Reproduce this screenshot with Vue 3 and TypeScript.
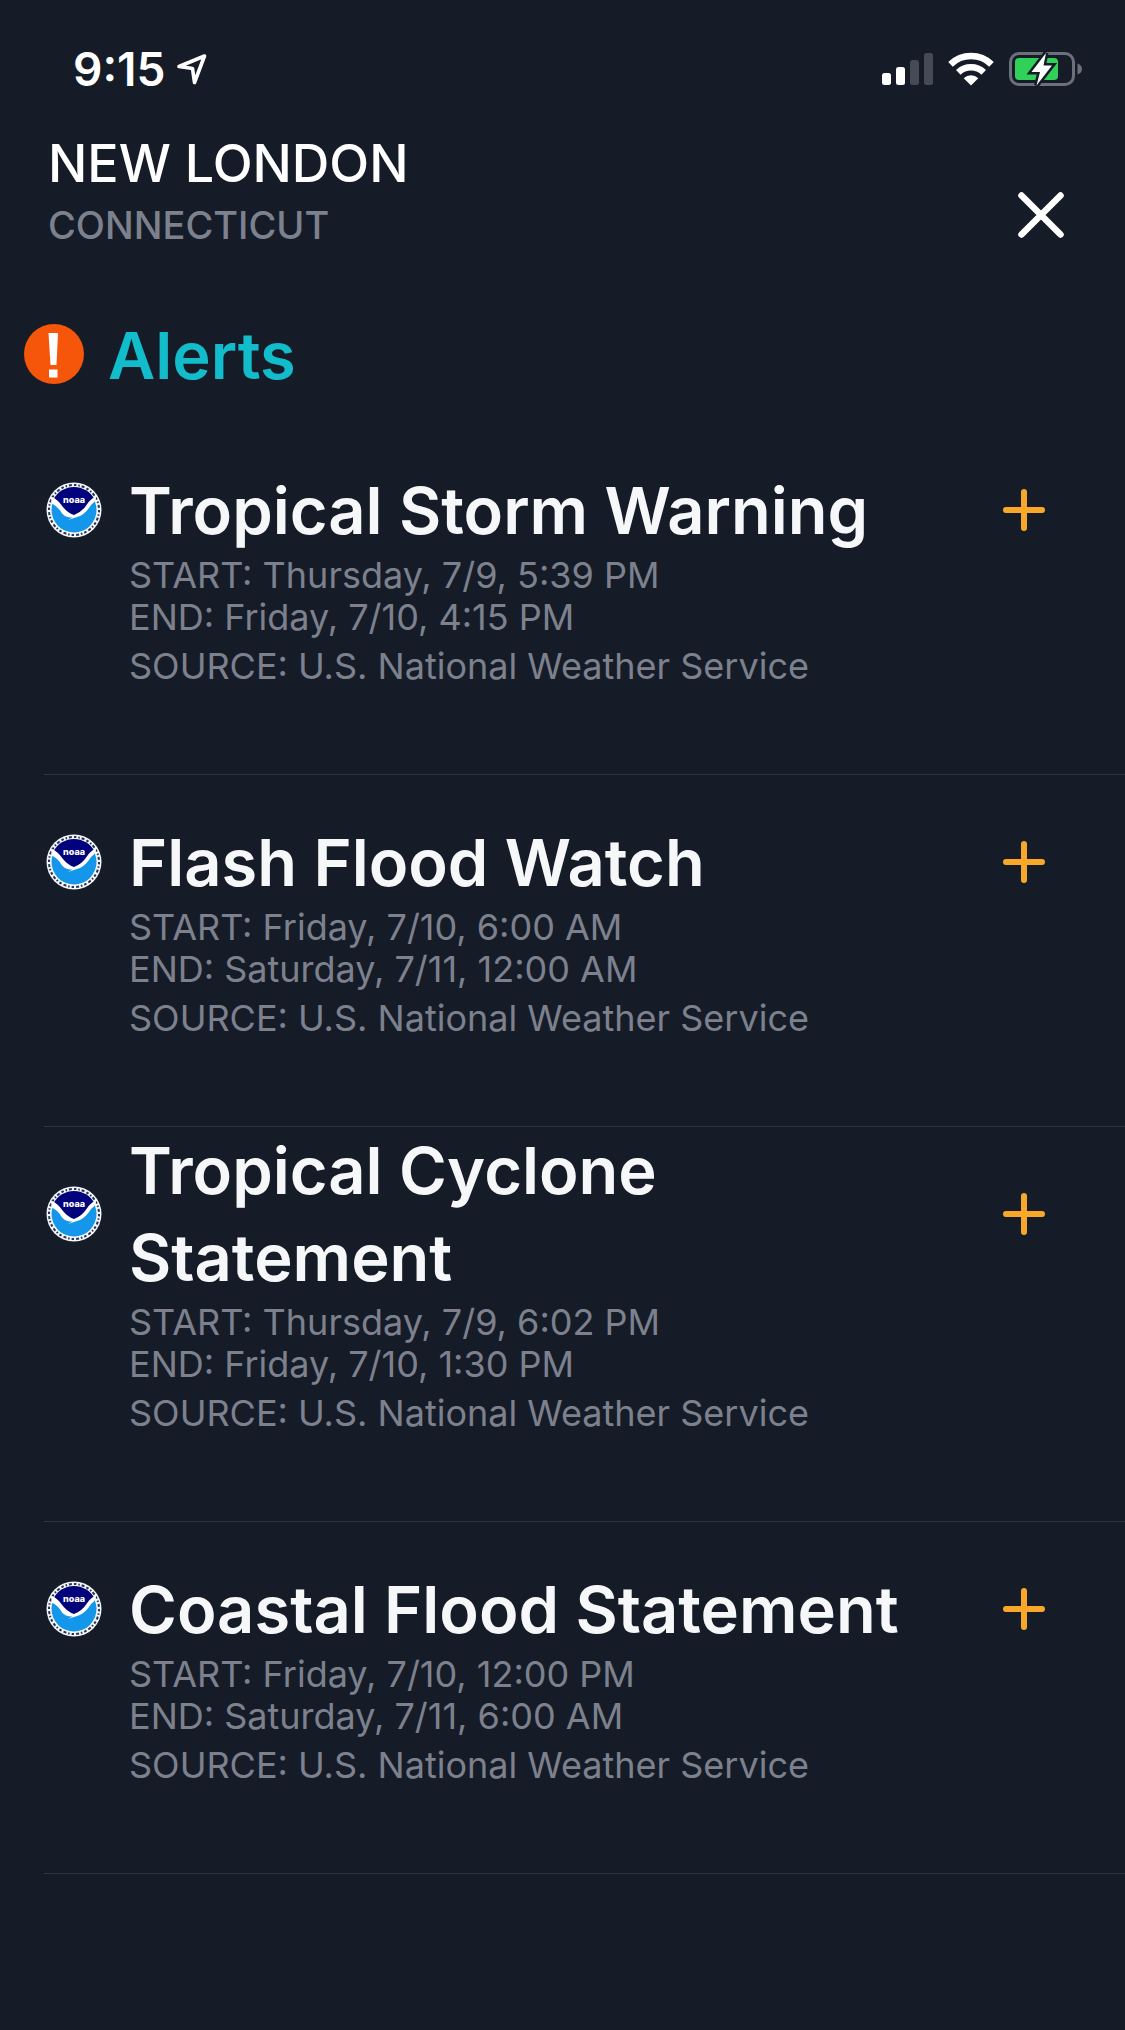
<script setup lang="ts">
interface WeatherAlert {
  id: number
  title: string
  start: string
  end: string
  source: string
}

const alerts: WeatherAlert[] = [
  { id: 1, title: 'Tropical Storm Warning', start: 'Thursday, 7/9, 5:39 PM', end: 'Friday, 7/10, 4:15 PM', source: 'U.S. National Weather Service' },
  { id: 2, title: 'Flash Flood Watch', start: 'Friday, 7/10, 6:00 AM', end: 'Saturday, 7/11, 12:00 AM', source: 'U.S. National Weather Service' },
  { id: 3, title: 'Tropical Cyclone Statement', start: 'Thursday, 7/9, 6:02 PM', end: 'Friday, 7/10, 1:30 PM', source: 'U.S. National Weather Service' },
  { id: 4, title: 'Coastal Flood Statement', start: 'Friday, 7/10, 12:00 PM', end: 'Saturday, 7/11, 6:00 AM', source: 'U.S. National Weather Service' },
]
</script>

<template>
  <div class="screen">
    <div class="status-bar">
      <div class="status-left">
        <span class="time">9:15</span>
        <svg class="location" width="32" height="32" viewBox="0 0 32 32" aria-hidden="true">
          <path d="M3 13.5 28.5 3 18.500 29.500 16.500 15.500Z" fill="none" stroke="#fff" stroke-width="3.600" stroke-linejoin="round" />
        </svg>
      </div>
      <div class="status-right">
        <svg width="52" height="34" viewBox="0 0 52 34" aria-hidden="true">
          <rect x="0" y="21" width="9" height="12" rx="2.500" fill="#fff" />
          <rect x="14" y="15" width="9" height="18" rx="2.500" fill="#fff" />
          <rect x="28" y="8" width="9" height="25" rx="2.500" fill="#454a56" />
          <rect x="42" y="1" width="9" height="32" rx="2.500" fill="#454a56" />
        </svg>
        <svg width="46" height="34" viewBox="0 0 46 34" aria-hidden="true">
          <g fill="none" stroke="#fff" stroke-width="6.600">
            <path d="M2.500 12.300A29.500 29.500 0 0 1 43.500 12.300" />
            <path d="M10.300 20.300A18.500 18.500 0 0 1 35.700 20.300" />
          </g>
          <path d="M23 33.500 15.700 26.200A10.500 10.500 0 0 1 30.300 26.200Z" fill="#fff" />
        </svg>
        <svg width="74" height="34" viewBox="0 0 74 34" aria-hidden="true">
          <rect x="2.500" y="1.500" width="63" height="31" rx="8.500" fill="none" stroke="#6c707b" stroke-width="3" />
          <path d="M69.500 11.500Q74 13 74 17T69.500 22.500Z" fill="#6c707b" />
          <rect x="7" y="6" width="43" height="22" rx="4" fill="#2fd158" />
          <path d="M38 1 23.500 20H32L28.500 33.500 44 13.500H35.500Z" fill="#fff" stroke="#151c28" stroke-width="5" paint-order="stroke" />
        </svg>
      </div>
    </div>

    <header class="place">
      <div>
        <h1 class="city">NEW LONDON</h1>
        <p class="state">CONNECTICUT</p>
      </div>
      <button class="icon-button" type="button" aria-label="Close">
        <svg width="48" height="48" viewBox="0 0 48 48" aria-hidden="true">
          <path d="M4.500 4.500 43.500 43.500M43.500 4.500 4.500 43.500" stroke="#fff" stroke-width="6.500" stroke-linecap="round" />
        </svg>
      </button>
    </header>

    <main>
      <div class="section-title">
        <svg width="60" height="60" viewBox="0 0 60 60" aria-hidden="true">
          <circle cx="30" cy="30" r="30" fill="#f6560a" />
          <path d="M24.500 9H34L32.500 41H26.500Z" fill="#fff" />
          <rect x="25" y="45.500" width="8.500" height="8" fill="#fff" />
        </svg>
        <h2>Alerts</h2>
      </div>

      <ul class="alerts">
        <li v-for="alert in alerts" :key="alert.id" class="alert">
          <svg class="agency" width="56" height="56" viewBox="0 0 56 56" role="img" aria-label="NOAA">
            <circle cx="28" cy="28" r="27.500" fill="#f4f6fa" />
            <circle cx="28" cy="28" r="25" fill="none" stroke="#26334c" stroke-width="2" stroke-dasharray="2.500 2 1.500 1.800 3 2.200" />
            <circle cx="28" cy="28" r="22.500" fill="#1496ea" />
            <path d="M7.500 17.500A23 23 0 0 1 48.500 17.500L40 26 29 34 16 27Z" fill="#02027c" />
            <path d="M6 15Q11 17 15 22.500 21 31 28 33 36 30 40.500 23 44.500 16.500 50 14.500 50.500 19 45.500 22.500 39.500 31.500 34 34L22 38 26.500 35.500Q20 36 16 31.500 12.500 25 6 21.500 4.500 18 6 15Z" fill="#fff" />
            <text x="28" y="21" text-anchor="middle" class="agency-name">noaa</text>
          </svg>
          <div class="alert-body">
            <h3 class="alert-title">{{ alert.title }}</h3>
            <p>START: {{ alert.start }}</p>
            <p>END: {{ alert.end }}</p>
            <p class="source">SOURCE: {{ alert.source }}</p>
          </div>
          <button class="icon-button expand" type="button" :aria-label="`Expand ${alert.title}`">
            <svg width="44" height="44" viewBox="0 0 44 44" aria-hidden="true">
              <path d="M22 4V40M4 22H40" stroke="#f9a72b" stroke-width="6" stroke-linecap="round" />
            </svg>
          </button>
        </li>
      </ul>
    </main>
  </div>
</template>

<style>
body {
  margin: 0;
  background: #151c28;
}
</style>

<style scoped>
.screen {
  box-sizing: border-box;
  min-height: 100vh;
  background: #151c28;
  color: #fff;
  font-family: Inter, "Liberation Sans", sans-serif;
}

h1,
h2,
h3,
p,
ul {
  margin: 0;
  padding: 0;
}

svg {
  display: block;
  flex: none;
}

.status-bar {
  display: flex;
  justify-content: space-between;
  align-items: center;
  padding: 42px 43px 0 73px;
}

.status-left {
  display: flex;
  align-items: center;
  gap: 11px;
}

.status-right {
  display: flex;
  align-items: center;
  gap: 14px;
}

.time {
  font-size: 46px;
  line-height: 54px;
  font-weight: 600;
}

.place {
  display: flex;
  justify-content: space-between;
  align-items: flex-end;
  padding: 36px 48px 0;
}

.city {
  font-size: 52px;
  line-height: 64px;
  font-weight: 500;
}

.state {
  font-size: 38px;
  line-height: 58px;
  font-weight: 500;
  color: #7d818d;
}

.icon-button {
  display: flex;
  align-items: center;
  justify-content: center;
  padding: 12px;
  border: 0;
  background: none;
  cursor: pointer;
}

.place .icon-button {
  margin-bottom: 3px;
}

.section-title {
  display: flex;
  align-items: center;
  gap: 24px;
  padding: 54px 24px 0;
}

.section-title h2 {
  padding-top: 4px;
  font-size: 65px;
  line-height: 87px;
  font-weight: 600;
  color: #12bccb;
}

.alerts {
  list-style: none;
  margin: 24px 0 0 44px;
}

.alert {
  display: grid;
  grid-template-columns: 58px 1fr 68px;
  column-gap: 27px;
  align-items: start;
  padding: 0 67px 87px 0;
  border-bottom: 1px solid #2e3440;
}

.agency {
  justify-self: end;
  margin-top: 59px;
}

.agency-name {
  fill: #fff;
  font-size: 9px;
  font-weight: 800;
}

.alert-title {
  display: flex;
  align-items: flex-end;
  min-height: 131px;
  font-size: 65px;
  line-height: 87px;
  font-weight: 600;
  color: #f6f7f8;
}

.alert-body p {
  font-size: 36px;
  line-height: 42px;
  color: #7d818d;
}

.alert-body .source {
  margin-top: 7px;
}

.expand {
  margin-top: 53px;
}
</style>
